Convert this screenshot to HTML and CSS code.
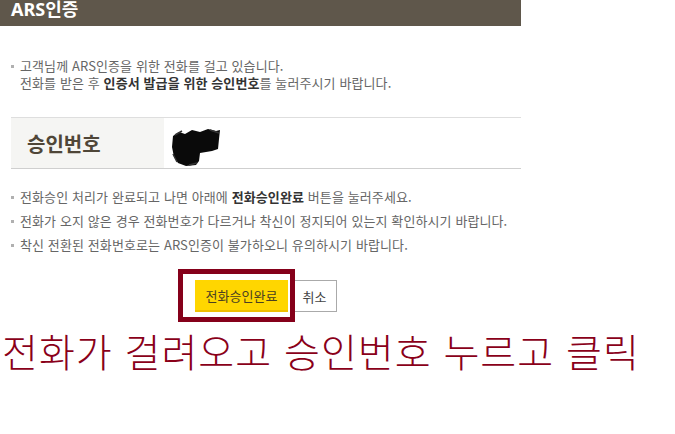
FILE: index.html
```html
<!DOCTYPE html>
<html lang="ko">

<head>
  <meta charset="UTF-8">
  <meta name="viewport" content="width=device-width, initial-scale=1.0">
  <title>ARS인증</title>
  <link rel="stylesheet" href="styles.css">
</head>

<body>
  <div class="ars">
    <div class="ars-head">
      <h2>ARS인증</h2>
    </div>

    <ul class="notice notice-top">
      <li>고객님께 ARS인증을 위한 전화를 걸고 있습니다.<br>
        전화를 받은 후 <b>인증서 발급을 위한 승인번호</b>를 눌러주시기 바랍니다.</li>
    </ul>

    <div class="code-row">
      <div class="code-label">승인번호</div>
      <div class="code-value">
        <!-- 가려진 승인번호 -->
        <svg class="scribble" width="52" height="40" viewBox="0 0 52 40">
          <path d="M3 9 L9 5 L15 7 L22 3 L30 5 L38 2 L46 4 L50 3 L49 12 L48 22 L42 24 L30 26 L29 34 L26 38 L16 39 L8 36 L4 30 L2 20 Z" fill="#0a0a0a"/>
          <path d="M5 8 L12 4 M40 3 L49 6 M3 27 L7 35 M27 36 L19 38" stroke="#333" stroke-width="1.5" fill="none"/>
        </svg>
      </div>
    </div>

    <ul class="notice notice-bottom">
      <li>전화승인 처리가 완료되고 나면 아래에 <b>전화승인완료</b> 버튼을 눌러주세요.</li>
      <li>전화가 오지 않은 경우 전화번호가 다르거나 착신이 정지되어 있는지 확인하시기 바랍니다.</li>
      <li>착신 전환된 전화번호로는 ARS인증이 불가하오니 유의하시기 바랍니다.</li>
    </ul>

    <div class="btns">
      <button class="btn btn-ok">전화승인완료</button>
      <button class="btn btn-cancel">취소</button>
      <span class="mark"></span>
    </div>
  </div>

  <p class="memo">전화가 걸려오고 승인번호 누르고 클릭</p>
</body>

</html>
```

FILE: styles.css
```css
body {
  margin: 0;
  background: #fff;
  font-family: "Noto Sans", "Noto Sans CJK KR", sans-serif;
  color: #666;
}

.ars {
  width: 521px;
}

.ars-head {
  height: 26px;
  padding: 0 11px;
  background: #5f574b;
  overflow: hidden;
}

.ars-head h2 {
  margin: -4px 0 0;
  font-size: 18px;
  line-height: 26px;
  font-weight: 700;
  color: #fff;
}

.notice {
  list-style: none;
  margin: 0;
  padding: 0 0 0 20px;
  font-family: "Noto Sans CJK KR", sans-serif;
  font-size: 13px;
  letter-spacing: 0.1px;
}

.notice li {
  position: relative;
}

.notice li::before {
  content: '';
  position: absolute;
  left: -9px;
  top: 8px;
  width: 3px;
  height: 3px;
  background: #b0b0b0;
}

.notice b {
  color: #333;
}

.notice-top {
  margin-top: 31px;
  line-height: 17px;
}

.code-row {
  display: flex;
  margin: 26px 0 0 11px;
  height: 50px;
  border-top: 1px solid #dedede;
  border-bottom: 1px solid #cfcfcf;
}

.code-label {
  display: flex;
  align-items: center;
  width: 137px;
  padding-left: 16px;
  background: #f5f5f3;
  font-family: "Noto Sans CJK KR", sans-serif;
  font-size: 20px;
  font-weight: 700;
  color: #4f4638;
}

.code-value {
  padding: 9px 0 0 6px;
}

.notice-bottom {
  margin-top: 16px;
  line-height: 24px;
}

.notice-bottom li::before {
  top: 11px;
}

.btns {
  position: relative;
  padding: 23px 0 0 195px;
  font-size: 0;
}

.btn {
  height: 32px;
  border: 1px solid #aaa;
  font-family: "Noto Sans CJK KR", sans-serif;
  font-size: 13px;
  vertical-align: top;
  cursor: pointer;
}

.btn-ok {
  width: 93px;
  margin-right: 4px;
  border: none;
  border-bottom: 2px solid #f0c000;
  background: #ffd600;
  color: #4a3f22;
}

.btn-cancel {
  width: 45px;
  background: #fff;
  color: #444;
}

.mark {
  position: absolute;
  left: 178px;
  top: 12px;
  width: 107px;
  height: 43px;
  border: 5px solid #85001a;
}

.memo {
  margin: 16px 0 0 2px;
  font-family: "Noto Sans CJK KR", sans-serif;
  font-size: 39px;
  font-weight: 300;
  line-height: 44px;
  letter-spacing: 1px;
  color: #8a0019;
}
```
